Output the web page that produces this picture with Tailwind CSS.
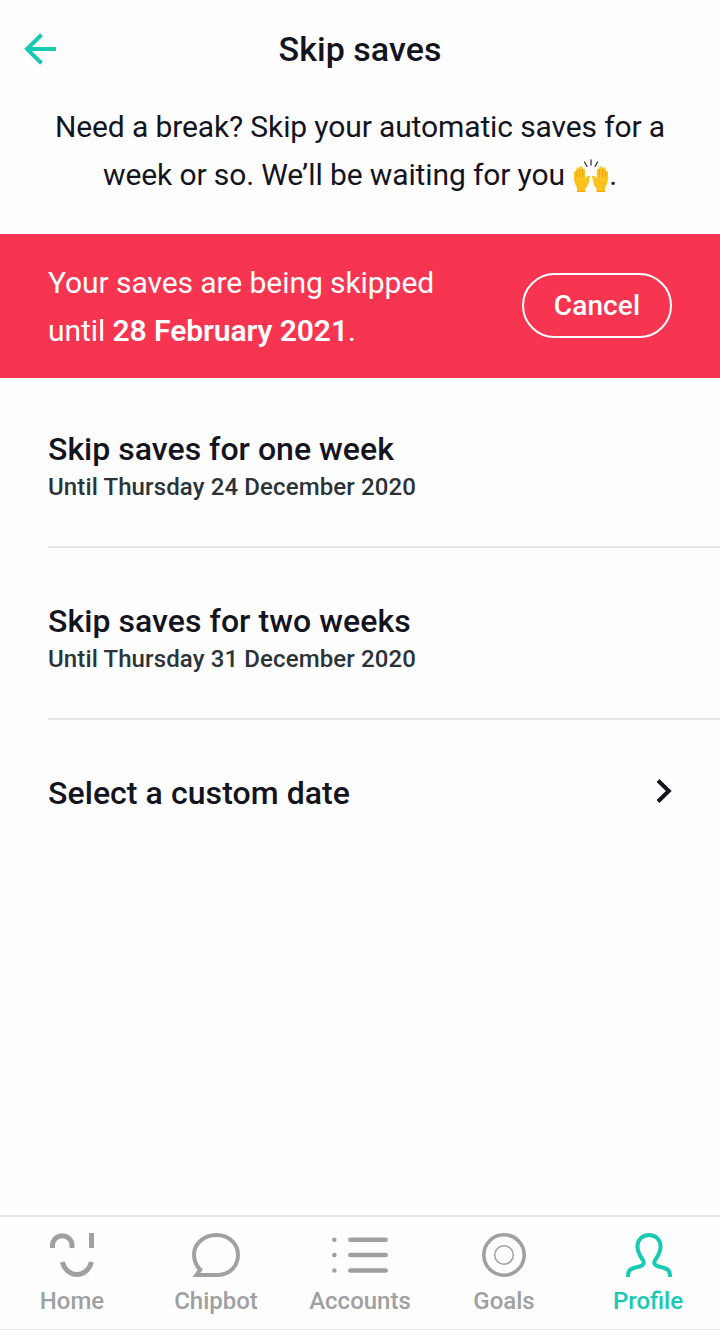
<!DOCTYPE html>
<html lang="en">
<head>
<meta charset="utf-8">
<title>Skip saves</title>
<script src="https://cdn.jsdelivr.net/npm/@tailwindcss/browser@4"></script>
</head>
<body class="bg-white">
<div class="flex h-[1330px] w-[720px] flex-col overflow-hidden bg-[#fefefe] font-['Roboto',sans-serif] text-[#14141f]">
  <header class="grid h-[98px] grid-cols-[80px_1fr_80px] items-center">
    <svg class="ml-6 h-8 w-8" viewBox="0 0 32 32" fill="none" stroke="#16cab3" stroke-width="4"><path d="M32 16H3M17.500 1.800 3 16l14.500 14.200"/></svg>
    <h1 class="text-center text-[34px] leading-[48px] font-medium tracking-[0.05px] whitespace-nowrap"><span>Skip saves</span></h1>
  </header>
  <p class="h-[136px] pt-[5px] text-center text-[30px] leading-[48px] tracking-[-0.12px] whitespace-nowrap"><span>Need a break? Skip your automatic saves for a</span><br><span>week or so. We’ll be waiting for you </span><svg class="ml-px inline-block h-[34px] w-[36px] align-[-8px]" viewBox="0 0 36 34" role="img" aria-label="Raised hands">
      <g stroke="#33343c" stroke-width="1.300" stroke-linecap="round"><path d="M18 1v5M11.500 3l2.500 4.500M24.500 3 22 7.500"/></g>
      <g id="hand"><path d="M4 33v-4.500C1.500 25 1 22 1 18v-4.500c0-2 2.300-2 2.600-.3V10c0-2.200 2.700-2.200 3 0V9c0-2.300 3-2.300 3 0v2c.3-1.700 2.500-1.500 2.500.5v8c1-2 3-3 5.300-2.200-1 2.200-1.400 3.500-1.700 6.200-.4 3-1.600 4.500-3.200 5.500v4z" fill="#fcc21b"/><path d="M3.700 11v7M6.700 10v8M9.600 10v8M4 32.400h8.500" stroke="#eda318" fill="none"/></g>
      <use href="#hand" transform="matrix(-1 0 0 1 36 0)"/>
    </svg><span>.</span></p>
  <section class="flex h-36 shrink-0 items-center justify-between bg-[#f83550] px-12 text-white">
    <p class="pt-[2px] text-[30px] leading-[48px] tracking-[-0.07px] whitespace-nowrap"><span>Your saves are being skipped</span><br><span>until </span><b class="font-semibold">28 February 2021</b>.</p>
    <button class="mb-[2px] h-[65px] w-[150px] rounded-full border-2 border-white pt-px text-[28px] font-medium tracking-[0.1px]"><span>Cancel</span></button>
  </section>
  <main class="ml-12 flex-1">
    <div class="h-[170px] border-b-2 border-[#e6e7e9] pt-[51px]">
      <h2 class="text-[32px] leading-10 font-medium tracking-[0.02px]"><span>Skip saves for one week</span></h2>
      <p class="text-[24px] leading-9 font-medium tracking-[0.12px] text-[#2b3339]"><span>Until Thursday 24 December 2020</span></p>
    </div>
    <div class="h-[172px] border-b-2 border-[#e6e7e9] pt-[53px]">
      <h2 class="text-[32px] leading-10 font-medium tracking-[0.06px]"><span>Skip saves for two weeks</span></h2>
      <p class="text-[24px] leading-9 font-medium tracking-[0.12px] text-[#2b3339]"><span>Until Thursday 31 December 2020</span></p>
    </div>
    <div class="flex items-start justify-between pt-[53px] pr-12">
      <h2 class="text-[32px] leading-10 font-medium tracking-[0.07px]"><span>Select a custom date</span></h2>
      <svg class="mt-[6px] h-6 w-4" viewBox="0 0 16 24" fill="none" stroke="#14141f" stroke-width="4"><path d="M2 1.500 12.800 12 2 22.500"/></svg>
    </div>
  </main>
  <nav class="grid h-[115px] shrink-0 grid-cols-5 border-t-2 border-b border-[#e8e8eb] text-[24px] leading-7 font-medium text-[#9fa0a2]">
    <a class="flex flex-col items-center"><svg class="mt-4 h-11 w-11" viewBox="0 0 44 44" fill="none" stroke="currentColor"><path stroke-width="5" d="M2.500 15v-2.500a9.750 9.750 0 0 1 19.500 0V15M41.500 0v15M12.300 29c2.200 7.800 7.700 12.400 14.600 12.400S39.300 36.800 41.500 29"/></svg><span class="mt-[10px]">Home</span></a>
    <a class="flex flex-col items-center"><svg class="mt-4 h-11 w-12" viewBox="0 0 48 44" fill="none" stroke="currentColor" stroke-width="4"><path d="M4.500 42H26C37.500 42 46 33 46 22S37 2 24.500 2 2 11 2 21.500c0 6 2.200 11.300 6.200 15.200z"/></svg><span class="mt-[10px]">Chipbot</span></a>
    <a class="flex flex-col items-center"><svg class="mt-4 h-11 w-14" viewBox="0 0 56 44" fill="none" stroke="currentColor" stroke-width="4.500" stroke-linecap="round"><path d="M18.300 6.700h35.400M18.300 22h35.400M18.300 37.500h35.400"/><path d="M2.300 6.700h.1M2.300 22h.1M2.300 37.500h.1"/></svg><span class="mt-[10px]">Accounts</span></a>
    <a class="flex flex-col items-center"><svg class="mt-4 h-11 w-11" viewBox="0 0 44 44" fill="none" stroke="currentColor"><circle cx="22" cy="22" r="20.200" stroke-width="3.600"/><circle cx="22" cy="22" r="9.300" stroke-width="1.500"/></svg><span class="mt-[10px]">Goals</span></a>
    <a class="flex flex-col items-center text-[#16cab3]"><svg class="mt-4 ml-[2px] h-11 w-[46px]" viewBox="0 0 46 44" fill="none" stroke="currentColor" stroke-width="4"><path d="M2 44v-1.500c0-4.500 2-6.800 6.500-7.800l5-1.200c4-1 5.300-3.500 3.300-6.500C14.500 23.500 11.500 19.500 11.500 13.500 11.500 6.500 16.500 2 23 2s11.500 4.500 11.500 11.500c0 6-3 10-5.300 13.500-2 3-.7 5.500 3.300 6.500l5 1.200c4.500 1 6.500 3.300 6.500 7.800V44"/></svg><span class="mt-[10px]">Profile</span></a>
  </nav>
</div>
</body>
</html>
